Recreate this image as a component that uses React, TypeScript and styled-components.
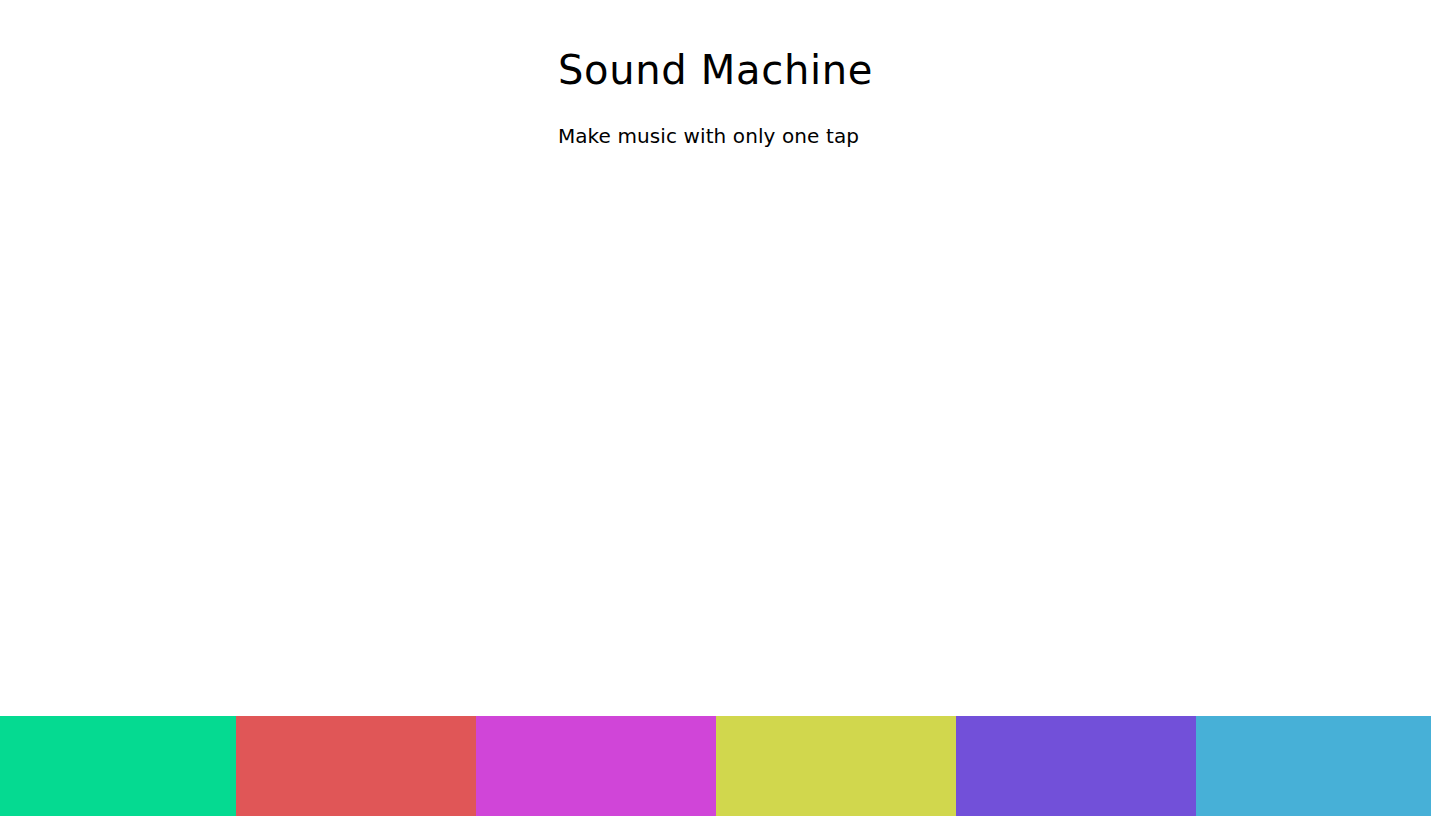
import React from "react";
import styled, { createGlobalStyle } from "styled-components";

const GlobalStyle = createGlobalStyle`
  html, body {
    margin: 0;
    padding: 0;
    background: #ffffff;
    overflow: hidden;
  }
  * { box-sizing: border-box; }
`;

const Page = styled.div`
  min-height: 100vh;
  display: flex;
  flex-direction: column;
  font-family: "DejaVu Sans", "Liberation Sans", sans-serif;
  color: #000;
`;

const Header = styled.header`
  align-self: center;
  width: fit-content;
  padding-top: 46px;
  text-align: left;
`;

const Title = styled.h1`
  margin: 0;
  font-size: 40px;
  line-height: 48px;
  font-weight: 400;
  letter-spacing: 0.7px;
`;

const Subtitle = styled.p`
  margin: 30px 0 0;
  font-size: 20px;
  line-height: 24px;
  font-weight: 400;
  letter-spacing: 0.1px;
`;

const Pads = styled.div`
  margin-top: auto;
  display: flex;
  justify-content: center;
  height: 100px;
`;

const Pad = styled.div<{ $color: string }>`
  flex: 0 0 240px;
  height: 100%;
  background: ${(p) => p.$color};
`;

const colors = ["#05DA91", "#E05657", "#D045D8", "#D1D74D", "#7250D9", "#47B0D7"];

export default function App() {
  return (
    <Page>
      <GlobalStyle />
      <Header>
        <Title>Sound Machine</Title>
        <Subtitle>Make music with only one tap</Subtitle>
      </Header>
      <Pads>
        {colors.map((c) => (
          <Pad key={c} $color={c} />
        ))}
      </Pads>
    </Page>
  );
}
